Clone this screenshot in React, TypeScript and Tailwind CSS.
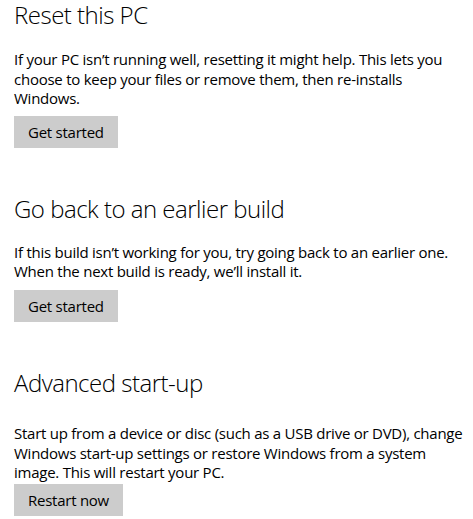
import React from 'react';

/**
 * Recovery settings page: reset, roll back and advanced start-up.
 */

interface RecoverySection {
  title: string;
  lines: string[];
  action: string;
  headingClass: string;
  bodyClass: string;
  buttonClass: string;
}

const sections: RecoverySection[] = [
  {
    title: 'Reset this PC',
    lines: [
      'If your PC isn\u2019t running well, resetting it might help. This lets you',
      'choose to keep your files or remove them, then re-installs',
      'Windows.',
    ],
    action: 'Get started',
    headingClass: 'mt-0',
    bodyClass: 'mt-[20px]',
    buttonClass: 'mt-[7.5px]',
  },
  {
    title: 'Go back to an earlier build',
    lines: [
      'If this build isn\u2019t working for you, try going back to an earlier one.',
      'When the next build is ready, we\u2019ll install it.',
    ],
    action: 'Get started',
    headingClass: 'mt-[45.5px]',
    bodyClass: 'mt-[19.3px]',
    buttonClass: 'mt-[8.3px]',
  },
  {
    title: 'Advanced start-up',
    lines: [
      'Start up from a device or disc (such as a USB drive or DVD), change',
      'Windows start-up settings or restore Windows from a system',
      'image. This will restart your PC.',
    ],
    action: 'Restart now',
    headingClass: 'mt-[46px]',
    bodyClass: 'mt-[26.4px]',
    buttonClass: 'mt-[1.1px]',
  },
];

function Section({ section }: { section: RecoverySection }): React.JSX.Element {
  return (
    <section className={section.headingClass}>
      <h2 className="text-[24px] leading-[30px] font-light tracking-[-0.5px] text-black">
        {section.title}
      </h2>
      <p className={`${section.bodyClass} text-[15px] leading-[19.5px] tracking-[-0.25px] text-black`}>
        {section.lines.map((line) => (
          <span key={line} className="block whitespace-nowrap">
            {line}
          </span>
        ))}
      </p>
      <button
        type="button"
        className={`${section.buttonClass} flex items-center h-[32px] px-[14px] bg-[#cccccc] text-[15px] tracking-[-0.25px] text-black`}
      >
        {section.action}
      </button>
    </section>
  );
}

export default function App(): React.JSX.Element {
  return (
    <div
      className="w-[473px] h-[519px] overflow-hidden bg-white px-[14px]"
      style={{ fontFamily: '"Segoe UI", "Open Sans", sans-serif' }}
    >
      {sections.map((section) => (
        <Section key={section.title} section={section} />
      ))}
    </div>
  );
}
